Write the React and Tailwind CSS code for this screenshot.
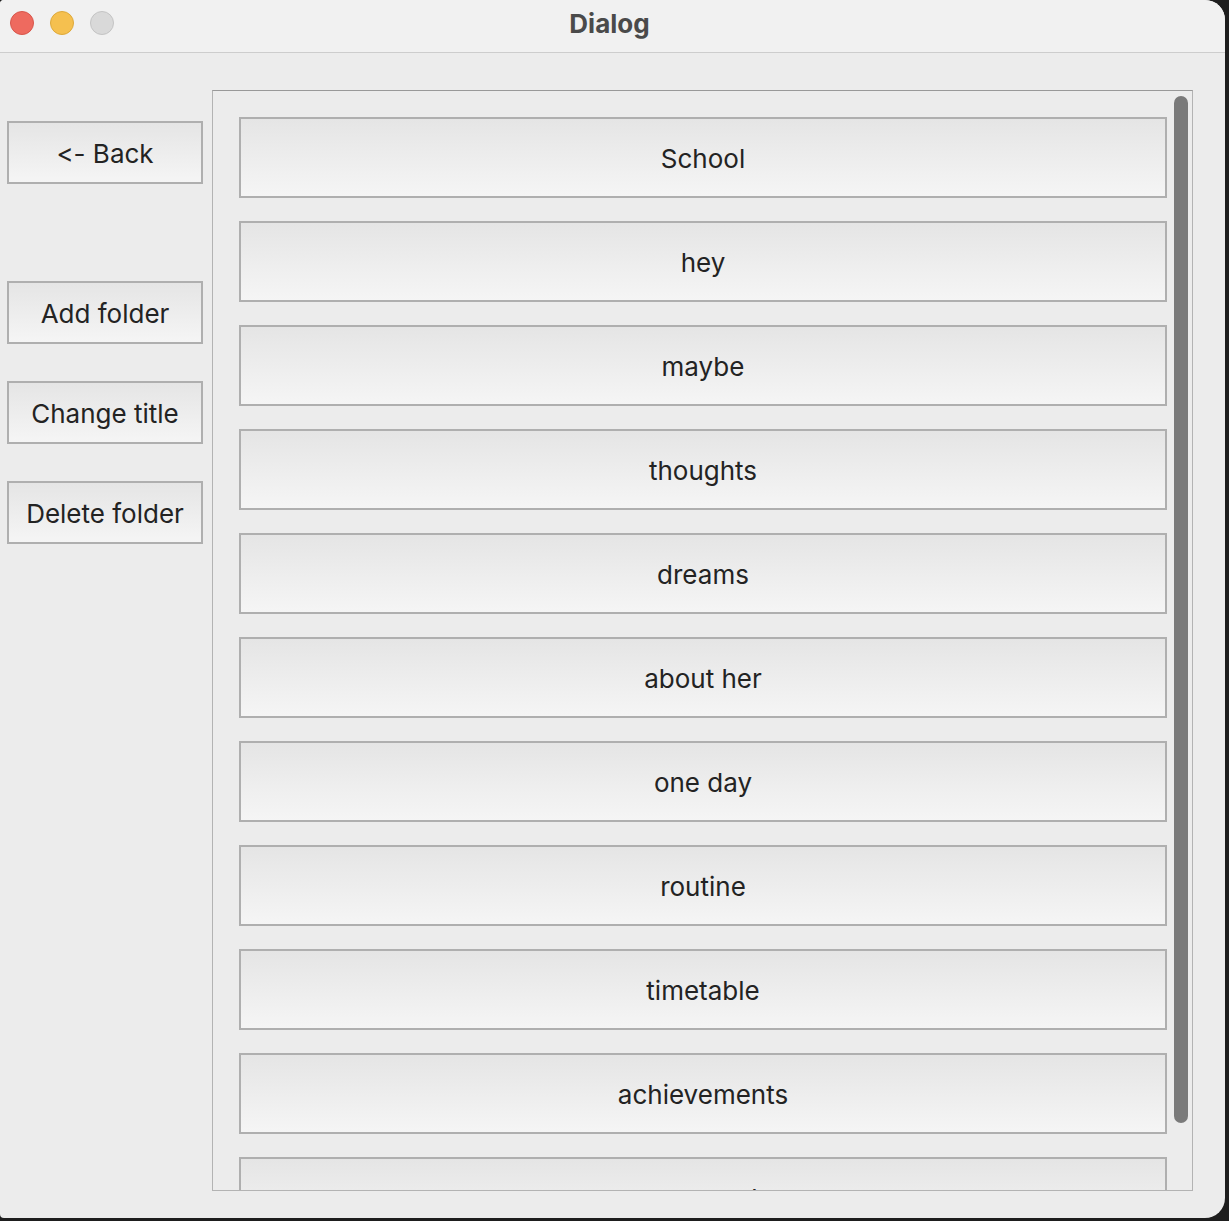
// App.jsx
import React from "react";

const folders = [
  "School",
  "hey",
  "maybe",
  "thoughts",
  "dreams",
  "about her",
  "one day",
  "routine",
  "timetable",
  "achievements",
  "reasons why",
];

const sideButtons = ["Add folder", "Change title", "Delete folder"];

function QtButton({ children, className = "" }) {
  return (
    <button
      className={`flex items-center justify-center pt-[2px] border-2 border-[#afafaf] bg-gradient-to-b from-[#e5e5e5] to-[#f5f5f5] text-[26px] text-[#232323] leading-none [font-feature-settings:"calt"_0] ${className}`}
    >
      {children}
    </button>
  );
}

function App() {
  return (
    <div
      className="w-[1229px] h-[1221px] bg-[#1e1e1e] overflow-hidden"
      style={{ fontFamily: "Inter, 'Liberation Sans', sans-serif" }}
    >
      <div className="w-[1225px] h-[1218px] rounded-r-[20px] rounded-l-[4px] overflow-hidden bg-[#ececec] flex flex-col">
        {/* title bar */}
        <div className="relative h-[53px] shrink-0 bg-[#f1f1f1] border-b border-[#cdcdcd] flex items-center justify-center">
          <div className="absolute left-[10px] top-[11px] flex gap-[16px]">
            <span className="w-[24px] h-[24px] rounded-full bg-[#ee6a5f] border border-[#d8564b]" />
            <span className="w-[24px] h-[24px] rounded-full bg-[#f5c04f] border border-[#dea93a]" />
            <span className="w-[24px] h-[24px] rounded-full bg-[#d9d9d9] border border-[#c4c4c4]" />
          </div>
          <span className="text-[26px] font-bold text-[#4a4a4a] -mt-[5px] -ml-[6px]">Dialog</span>
        </div>

        {/* body */}
        <div className="flex flex-1 pt-[37px] pl-[7px]">
          <div className="w-[196px] shrink-0 flex flex-col pt-[31px]">
            <QtButton className="h-[63px]">&lt;- Back</QtButton>
            <div className="flex flex-col gap-[37px] mt-[97px]">
              {sideButtons.map((label) => (
                <QtButton key={label} className="h-[63px]">
                  {label}
                </QtButton>
              ))}
            </div>
          </div>

          <div className="relative ml-[9px] w-[981px] h-[1101px] border border-[#b3b3b3] border-t-[#999999] overflow-hidden">
            <div className="flex flex-col gap-[23px] pl-[26px] pt-[26px]">
              {folders.map((name) => (
                <QtButton key={name} className="w-[928px] h-[81px] shrink-0">
                  {name}
                </QtButton>
              ))}
            </div>
            <div className="absolute left-[961px] top-[5px] w-[14px] h-[1027px] rounded-full bg-[#7a7a7a]" />
          </div>
        </div>
      </div>
    </div>
  );
}

export default App;
